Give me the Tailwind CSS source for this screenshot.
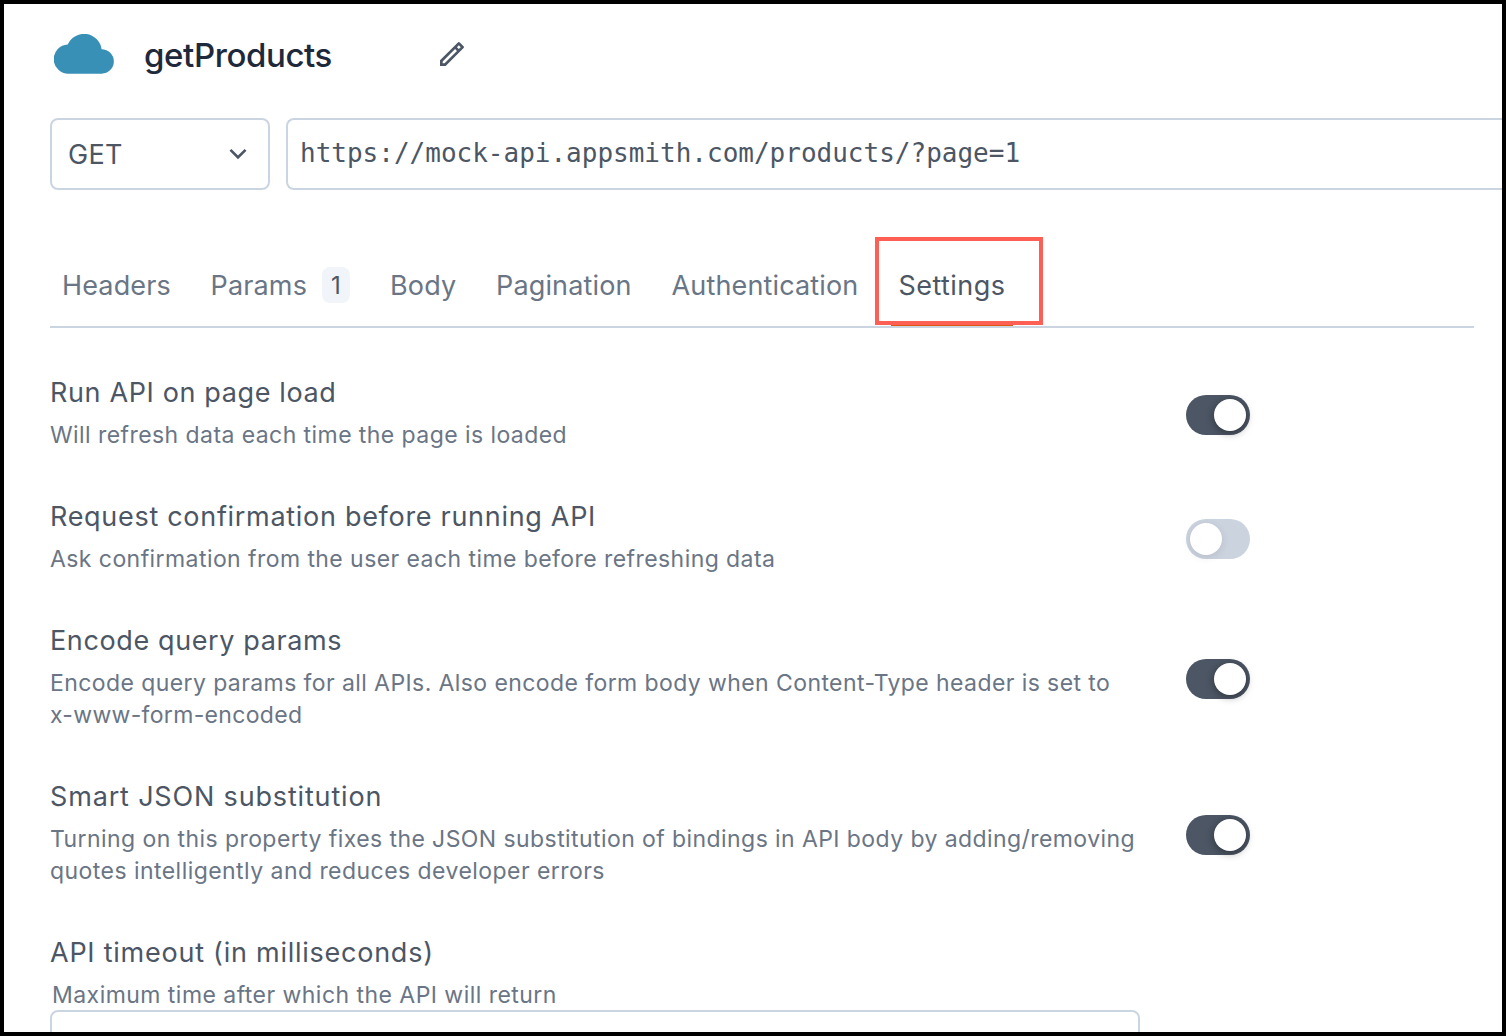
<!DOCTYPE html>
<html lang="en">
<head>
<meta charset="utf-8">
<title>getProducts</title>
<script src="https://cdn.jsdelivr.net/npm/@tailwindcss/browser@4"></script>
</head>
<body class="h-[1036px] w-[1506px] overflow-hidden font-['Inter',sans-serif] text-[#4c5664]">
<div class="h-full w-full overflow-hidden border-4 border-black bg-white pl-[46px]">
  <header class="flex h-[100px] items-center">
    <svg class="ml-1 h-10 w-[60px] shrink-0" viewBox="0 0 60 40" fill="#3990b7"><path d="M14.9 39.7A14.6 14.6 0 0 1 13.7 10.5A17.8 17.8 0 0 1 47.6 15.2A12.25 12.25 0 0 1 47.6 39.7Z"/></svg>
    <h1 class="ml-[30px] w-[292px] pt-px text-[33px] leading-10 font-medium tracking-[-0.4px] text-[#1e293b]">getProducts</h1>
    <svg class="h-8 w-8" viewBox="0 0 24 24" fill="#4c5664"><path d="M15.728 9.686l-1.414-1.414L5 17.586V19h1.414l9.314-9.314zm1.414-1.414l1.414-1.414-1.414-1.414-1.414 1.414 1.414 1.414zM7.242 21H3v-4.243L16.435 3.322a1 1 0 0 1 1.414 0l2.829 2.829a1 1 0 0 1 0 1.414L7.243 21z"/></svg>
  </header>

  <div class="mt-[14px] flex gap-4">
    <div class="flex h-[72px] w-[220px] items-center justify-between rounded-lg border-2 border-[#cbd5e1] pr-[14px] pl-4 text-[27px] tracking-[0.3px]">
      <span class="pt-[2px]">GET</span>
      <svg class="h-8 w-8" viewBox="0 0 24 24" fill="#4c5664"><path d="M12 13.172l4.95-4.95 1.414 1.414L12 16 5.636 9.636 7.05 8.222z"/></svg>
    </div>
    <div class="flex h-[72px] flex-1 items-center rounded-l-lg border-2 border-r-0 border-[#cbd5e1] pb-[2px] pl-3 font-['DejaVu_Sans_Mono',monospace] text-[26px]">https://mock-api.appsmith.com/products/?page=1</div>
  </div>

  <nav class="mt-[60px] flex h-[78px] w-[1424px] border-b-2 border-[#cbd5e1] pl-3 text-[27px] leading-[72px] tracking-[0.15px] text-[#6a7585]">
    <a class="w-[148.5px]">Headers</a>
    <a class="flex w-[179.5px] items-center self-start"><span class="w-[111.5px]">Params</span><span class="mb-[2px] h-9 w-7 rounded-lg bg-[#f1f5f9] text-center text-[24px] leading-[38px] text-[#4c5664]">1</span></a>
    <a class="w-[106px]">Body</a>
    <a class="w-[175.5px]">Pagination</a>
    <a class="w-[219.5px]">Authentication</a>
    <a class="relative h-[76px] w-[122px] border-b-2 border-[#e15615] pl-[7.5px] tracking-[0.45px] text-[#4c5664]">Settings
      <span class="absolute -top-[13px] -left-4 h-[88px] w-[168px] border-4 border-[#fd5f54]"></span>
    </a>
  </nav>

  <main class="mt-[45px] flex flex-col gap-[46px] text-[23px] leading-8 tracking-[0.43px] text-[#6a7585]">
    <section class="flex items-center">
      <div class="w-[1136px]">
        <h2 class="mb-[6px] text-[27px] leading-10 tracking-[0.63px] text-[#4c5664]">Run API on page load</h2>
        <p>Will refresh data each time the page is loaded</p>
      </div>
      <div class="mt-[6px] flex h-10 w-16 justify-end rounded-full bg-[#4c5664] p-1"><span class="h-8 w-8 rounded-full bg-white shadow-[0_2px_8px_rgba(0,0,0,0.4)]"></span></div>
    </section>
    <section class="flex items-center">
      <div class="w-[1136px]">
        <h2 class="mb-[6px] text-[27px] leading-10 tracking-[0.7px] text-[#4c5664]">Request confirmation before running API</h2>
        <p>Ask confirmation from the user each time before refreshing data</p>
      </div>
      <div class="mt-[6px] flex h-10 w-16 rounded-full bg-[#cbd3df] p-1"><span class="h-8 w-8 rounded-full bg-white shadow-[0_2px_8px_rgba(0,0,0,0.1)]"></span></div>
    </section>
    <section class="flex items-center">
      <div class="w-[1136px]">
        <h2 class="mb-[6px] text-[27px] leading-10 tracking-[0.62px] text-[#4c5664]">Encode query params</h2>
        <p class="tracking-[0.41px]">Encode query params for all APIs. Also encode form body when Content-Type header is set to<br><span class="tracking-[0.32px]">x-www-form-encoded</span></p>
      </div>
      <div class="mt-[6px] flex h-10 w-16 justify-end rounded-full bg-[#4c5664] p-1"><span class="h-8 w-8 rounded-full bg-white shadow-[0_2px_8px_rgba(0,0,0,0.4)]"></span></div>
    </section>
    <section class="flex items-center">
      <div class="w-[1136px]">
        <h2 class="mb-[6px] text-[27px] leading-10 tracking-[0.83px] text-[#4c5664]">Smart JSON substitution</h2>
        <p class="tracking-[0.42px]">Turning on this property fixes the JSON substitution of bindings in API body by adding/removing<br><span class="tracking-[0.45px]">quotes intelligently and reduces developer errors</span></p>
      </div>
      <div class="mt-[6px] flex h-10 w-16 justify-end rounded-full bg-[#4c5664] p-1"><span class="h-8 w-8 rounded-full bg-white shadow-[0_2px_8px_rgba(0,0,0,0.4)]"></span></div>
    </section>
    <section class="w-[1090px]">
      <h2 class="mb-[6px] text-[27px] leading-10 tracking-[0.75px] text-[#4c5664]">API timeout (in milliseconds)</h2>
      <p class="pl-[2px] tracking-[0.46px]">Maximum time after which the API will return</p>
      <div class="-mt-px h-[72px] rounded-lg border-2 border-[#cbd5e1]"></div>
    </section>
  </main>
</div>
</body>
</html>
